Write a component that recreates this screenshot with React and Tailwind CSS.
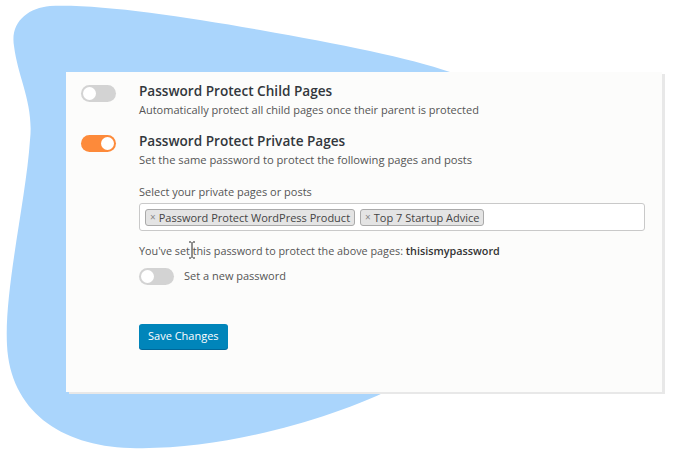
import React from "react";

const Toggle = ({ on, className = "" }) => (
  <div
    className={`relative h-[17px] w-[35px] shrink-0 rounded-full ${
      on ? "bg-[#fd8a3a]" : "bg-[#d3d3d3]"
    } ${className}`}
  >
    <div
      className={`absolute top-[2px] h-[13px] w-[13px] rounded-full bg-white ${
        on ? "right-[2px]" : "left-[2px]"
      }`}
    />
  </div>
);

const Tag = ({ label }) => (
  <span className="flex h-[17px] items-center gap-[3px] rounded-[3px] border border-[#aaaaaa] bg-[#e4e4e4] px-[4px] text-[11px] leading-none text-[#444]">
    <span className="text-[10px] text-[#888]">×</span>
    {label}
  </span>
);

const App = () => {
  return (
    <div
      className="relative h-[454px] w-[675px] overflow-hidden bg-white"
      style={{ fontFamily: '"Open Sans", "Noto Sans", sans-serif' }}
    >
      <svg
        className="absolute inset-0"
        width="675"
        height="454"
        viewBox="0 0 675 454"
      >
        <path
          d="M 50 6 C 28 8 10 22 14 46 C 18 78 34 104 30 140 C 26 200 4 290 7 345 C 10 410 60 446 130 448 C 220 451 330 420 400 385 L 500 200 L 450 72 C 410 58 340 44 260 30 C 180 16 100 4 50 6 Z"
          fill="#aad5fc"
        />
      </svg>

      <div className="relative ml-[66px] mt-[72px] h-[320px] w-[596px] bg-[#fcfcfb] shadow-[3px_2px_0_#e8e8e8]">
        <div className="flex flex-col pl-[15px] pt-[10px]">
          <div className="flex gap-[23px]">
            <Toggle className="mt-[3px]" />
            <div>
              <div className="text-[13.6px] font-semibold leading-[18px] text-[#32373c]">
                Password Protect Child Pages
              </div>
              <div className="mt-[2px] text-[11px] leading-[16px] text-[#555]">
                Automatically protect all child pages once their parent is
                protected
              </div>
            </div>
          </div>

          <div className="mt-[14px] flex gap-[23px]">
            <Toggle on className="mt-[3px]" />
            <div className="w-[506px]">
              <div className="text-[13.6px] font-semibold leading-[18px] text-[#32373c]">
                Password Protect Private Pages
              </div>
              <div className="mt-[2px] text-[11.2px] leading-[16px] text-[#555]">
                Set the same password to protect the following pages and posts
              </div>

              <div className="mt-[16px] text-[11px] leading-[16px] text-[#555]">
                Select your private pages or posts
              </div>
              <div className="mt-[3px] flex h-[28px] items-center gap-[5px] rounded-[3px] border border-[#c9c9c9] bg-white px-[5px]">
                <Tag label="Password Protect WordPress Product" />
                <Tag label="Top 7 Startup Advice" />
              </div>

              <div className="relative mt-[12px] text-[10.8px] leading-[16px] text-[#555]">
                You've set this password to protect the above pages:{" "}
                <span className="font-semibold text-[#333]">
                  thisismypassword
                </span>
                <svg
                  className="absolute left-[49px] top-[-2px]"
                  width="8"
                  height="18"
                  viewBox="0 0 8 18"
                >
                  <path
                    d="M1 1 H3 M5 1 H7 M4 1 V17 M1 17 H3 M5 17 H7"
                    stroke="#222"
                    strokeWidth="1"
                    fill="none"
                  />
                </svg>
              </div>

              <div className="mt-[9px] flex items-center gap-[10px]">
                <Toggle />
                <span className="text-[11px] text-[#555]">
                  Set a new password
                </span>
              </div>

              <button className="mt-[39px] h-[25px] rounded-[3px] bg-[#0085ba] px-[9px] text-[11px] text-white shadow-[0_1px_0_#006799]">
                Save Changes
              </button>
            </div>
          </div>
        </div>
      </div>
    </div>
  );
};

export default App;
